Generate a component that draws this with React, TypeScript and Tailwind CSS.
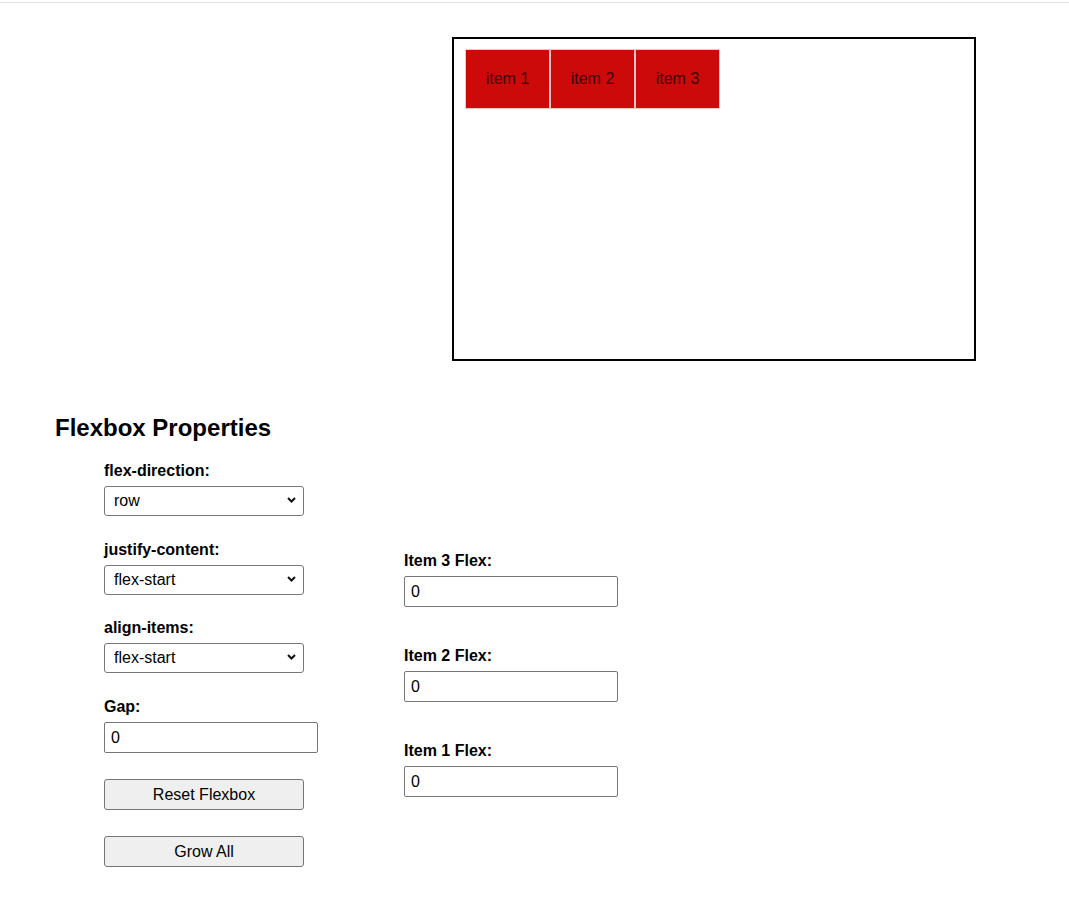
import { useState } from 'react';

const Chevron = () => (
    <svg
        className="pointer-events-none absolute right-[8px] top-[11px]"
        width="9"
        height="6"
        viewBox="0 0 9 6"
        fill="none"
    >
        <path d="M1 1l3.5 3.5L8 1" stroke="#111" strokeWidth="2" />
    </svg>
);

const Select = ({ value, options }: { value: string; options: string[] }) => (
    <div className="relative w-[200px]">
        <select
            defaultValue={value}
            className="block h-[30px] w-[200px] appearance-none rounded-[3px] border border-[#767676] bg-white pl-[9px] text-[16px] text-black outline-none"
        >
            {options.map((o) => (
                <option key={o}>{o}</option>
            ))}
        </select>
        <Chevron />
    </div>
);

const NumInput = ({ value }: { value: string }) => (
    <input
        defaultValue={value}
        className="block h-[31px] w-[214px] rounded-[2px] border border-[#767676] bg-white px-[6px] text-[16px] text-black outline-none"
    />
);

const Label = ({ children }: { children: string }) => (
    <label className="mb-[6px] block text-[16px] font-bold leading-[18px] text-black">{children}</label>
);

const justifyOpts = ['flex-start', 'flex-end', 'center', 'space-between', 'space-around'];

export default function App() {
    const [items] = useState(['item 1', 'item 2', 'item 3']);

    return (
        <div className="min-h-screen bg-white pt-[2px] font-['Liberation_Sans',Arial,sans-serif] text-black">
            <div className="h-px bg-[#e3e3e3]" />

            {/* preview box */}
            <div className="ml-[452px] mt-[34px] h-[324px] w-[524px] border-2 border-black pl-[11px] pt-[10px]">
                <div className="flex">
                    {items.map((it) => (
                        <div
                            key={it}
                            className="flex h-[60px] w-[85px] items-center justify-center border border-[#f4c4c4] bg-[#cc0a0a] text-[16px] text-[#3a0505]"
                        >
                            {it}
                        </div>
                    ))}
                </div>
            </div>

            <h2 className="ml-[55px] mt-[53px] text-[24px] font-bold leading-[28px]">Flexbox Properties</h2>

            <div className="ml-[104px] mt-[20px] flex pb-[30px]">
                <div className="flex w-[214px] flex-col">
                    <Label>flex-direction:</Label>
                    <Select value="row" options={['row', 'row-reverse', 'column', 'column-reverse']} />

                    <div className="mt-[25px]">
                        <Label>justify-content:</Label>
                        <Select value="flex-start" options={justifyOpts} />
                    </div>

                    <div className="mt-[24px]">
                        <Label>align-items:</Label>
                        <Select value="flex-start" options={['flex-start', 'flex-end', 'center', 'stretch', 'baseline']} />
                    </div>

                    <div className="mt-[25px]">
                        <Label>Gap:</Label>
                        <NumInput value="0" />
                    </div>

                    <button className="mt-[26px] h-[31px] w-[200px] rounded-[3px] border border-[#767676] bg-[#efefef] text-[16px] text-black">
                        Reset Flexbox
                    </button>
                    <button className="mt-[26px] h-[31px] w-[200px] rounded-[3px] border border-[#767676] bg-[#efefef] text-[16px] text-black">
                        Grow All
                    </button>
                </div>

                <div className="ml-[86px] flex flex-col pt-[90px]">
                    <Label>Item 3 Flex:</Label>
                    <NumInput value="0" />
                    <div className="mt-[40px]">
                        <Label>Item 2 Flex:</Label>
                        <NumInput value="0" />
                    </div>
                    <div className="mt-[40px]">
                        <Label>Item 1 Flex:</Label>
                        <NumInput value="0" />
                    </div>
                </div>
            </div>
        </div>
    );
}
